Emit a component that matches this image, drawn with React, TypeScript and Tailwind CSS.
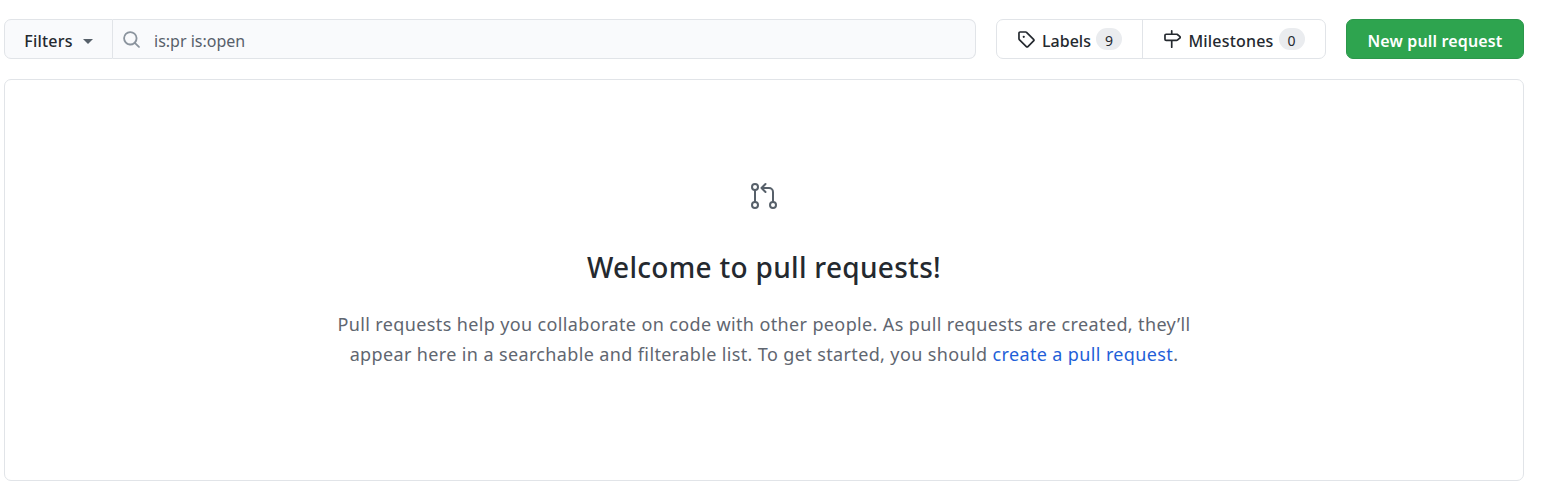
export default function App() {
  return (
    <div className="w-[1544px] h-[495px] bg-white pt-[19px] pl-[4px] pr-[20px] font-['Noto_Sans','Open_Sans',sans-serif] text-[16px] text-[#24292f]">
      <div className="flex h-[40px]">
        <div className="flex flex-1 h-full">
          <button className="w-[109px] h-full flex items-center justify-center gap-[10px] bg-[#f9fafc] border border-[#e1e4e8] rounded-l-[7px] font-medium">
            <span className="pt-[4px] tracking-[0.2px]">Filters</span>
            <span className="w-0 h-0 border-x-[5px] border-x-transparent border-t-[5px] border-t-[#57606a] mt-[4px]" />
          </button>
          <div className="flex-1 h-full flex items-center bg-[#f9fafc] border border-l-0 border-[#e1e4e8] rounded-r-[7px] pl-[9px]">
            <svg width="19" height="19" viewBox="0 0 16 16" fill="#8b949e">
              <path d="M10.68 11.74a6 6 0 0 1-7.922-8.982 6 6 0 0 1 8.982 7.922l3.04 3.04a.749.749 0 0 1-.326 1.275.749.749 0 0 1-.734-.215ZM11.5 7a4.499 4.499 0 1 0-8.997 0A4.499 4.499 0 0 0 11.5 7Z" />
            </svg>
            <span className="ml-[13px] pt-[4px] text-[#57606a]">is:pr is:open</span>
          </div>
        </div>
        <div className="flex h-full ml-[20px] border border-[#e1e4e8] rounded-[7px]">
          <div className="w-[146px] flex items-center justify-center border-r border-[#e1e4e8]">
            <svg width="18" height="18" viewBox="0 0 16 16" fill="#24292f">
              <path d="M1 7.775V2.75C1 1.784 1.784 1 2.75 1h5.025c.464 0 .91.184 1.238.513l6.25 6.25a1.75 1.75 0 0 1 0 2.474l-5.026 5.026a1.75 1.75 0 0 1-2.474 0l-6.25-6.25A1.752 1.752 0 0 1 1 7.775Zm1.5 0c0 .066.026.13.073.177l6.25 6.25a.25.25 0 0 0 .354 0l5.025-5.025a.25.25 0 0 0 0-.354l-6.25-6.25a.25.25 0 0 0-.177-.073H2.75a.25.25 0 0 0-.25.25ZM6 5a1 1 0 1 1 0 2 1 1 0 0 1 0-2Z" />
            </svg>
            <span className="ml-[7px] pt-[4px] font-medium">Labels</span>
            <span className="ml-[5px] w-[26px] h-[22px] rounded-full bg-[#eaecef] flex items-center justify-center text-[14px] pt-[2px]">9</span>
          </div>
          <div className="w-[182px] flex items-center justify-center">
            <svg width="18" height="18" viewBox="0 0 16 16" fill="#24292f">
              <path d="M7.75 0a.75.75 0 0 1 .75.75V3h3.634c.414 0 .814.147 1.13.414l2.07 1.75a1.75 1.75 0 0 1 0 2.672l-2.07 1.75a1.75 1.75 0 0 1-1.13.414H8.5v5.25a.75.75 0 0 1-1.5 0V10H2.75A1.75 1.75 0 0 1 1 8.25v-3.5C1 3.784 1.784 3 2.75 3H7V.75A.75.75 0 0 1 7.75 0Zm4.384 8.5a.25.25 0 0 0 .161-.06l2.07-1.75a.248.248 0 0 0 0-.38l-2.07-1.75a.25.25 0 0 0-.161-.06H2.75a.25.25 0 0 0-.25.25v3.5c0 .138.112.25.25.25h9.384Z" />
            </svg>
            <span className="ml-[7px] pt-[4px] font-medium tracking-[0.2px]">Milestones</span>
            <span className="ml-[5px] w-[26px] h-[22px] rounded-full bg-[#eaecef] flex items-center justify-center text-[14px] pt-[2px]">0</span>
          </div>
        </div>
        <button className="ml-[20px] w-[178px] h-full bg-[#2ea44f] text-white rounded-[7px] font-semibold border border-[#2c974b] pt-[3px] tracking-[0.15px]">
          New pull request
        </button>
      </div>
      <div className="mt-[20px] h-[402px] border border-[#e1e4e8] rounded-[7px] flex flex-col items-center pt-[102px]">
        <svg width="28" height="28" viewBox="0 0 28 28" fill="none" stroke="#57606a" strokeWidth="2" strokeLinecap="round" strokeLinejoin="round">
          <circle cx="5" cy="5" r="3" />
          <circle cx="5" cy="23" r="3" />
          <circle cx="23" cy="23" r="3" />
          <path d="M5 8v12" />
          <path d="M23 20V10a4 4 0 0 0-4-4h-6.5" />
          <path d="M15.5 2 11.5 6l4 4" />
        </svg>
        <h2 className="mt-[37px] text-[28px] leading-[40px] font-medium tracking-[0.3px]">Welcome to pull requests!</h2>
        <p className="mt-[22px] w-[880px] text-center text-[18px] leading-[30px] tracking-[0.37px] text-[#5f6670]">
          Pull requests help you collaborate on code with other people. As pull requests are created, they’ll appear here in a searchable and filterable list. To get started, you should <a className="text-[#1f5fd8]">create a pull request</a>.
        </p>
      </div>
    </div>
  );
}
